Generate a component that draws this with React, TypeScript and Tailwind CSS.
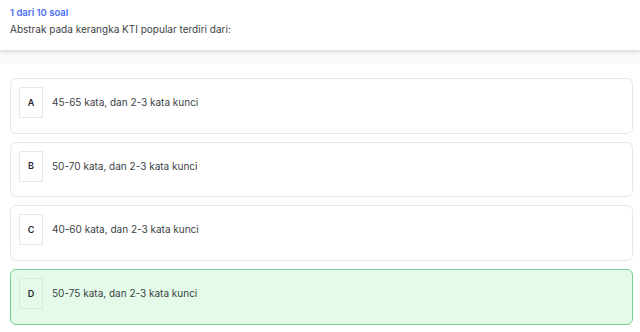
const options: Array<[string, string]> = [
  ["A", "45-65 kata, dan 2-3 kata kunci"],
  ["B", "50-70 kata, dan 2-3 kata kunci"],
  ["C", "40-60 kata, dan 2-3 kata kunci"],
  ["D", "50-75 kata, dan 2-3 kata kunci"],
];

const SELECTED = "D";

export default function App() {
  return (
    <div className="min-h-screen w-[640px] bg-white font-['Inter',sans-serif]">
      {/* Kopf: Fortschritt + Frage */}
      <div className="relative z-10 h-[50px] bg-white px-[10px] pt-[7px] shadow-[0_2px_4px_rgba(0,0,0,0.12)]">
        <div className="text-[9.5px] font-semibold leading-[12px] text-[#4c6ef5]">
          1 dari 10 soal
        </div>
        <div className="mt-[4px] text-[10px] leading-[13px] text-[#3b3f46]">
          Abstrak pada kerangka KTI popular terdiri dari:
        </div>
      </div>
      <div className="h-[14px] bg-[#f8f9fb]" />

      {/* Antwortoptionen */}
      <div className="flex flex-col gap-[8px] pl-[10px] pr-[7px] pt-[14px]">
        {options.map(([key, label]) => {
          const active = key === SELECTED;
          return (
            <div
              key={key}
              className={`h-[55.7px] rounded-[6px] border px-[8px] pt-[8px] ${
                active
                  ? "border-[#74d18f] bg-[#e4fbea]"
                  : "border-[#e6e8ef] bg-white"
              }`}
            >
              <div className="flex items-center gap-[9px]">
                <div
                  className={`flex h-[31px] w-[24px] items-center justify-center border text-[9px] font-semibold text-[#1f2937] ${
                    active ? "border-[#d7eadf]" : "border-[#e6e8ef]"
                  }`}
                >
                  {key}
                </div>
                <span className="text-[10px] text-[#3b3f46]">{label}</span>
              </div>
            </div>
          );
        })}
      </div>
    </div>
  );
}
